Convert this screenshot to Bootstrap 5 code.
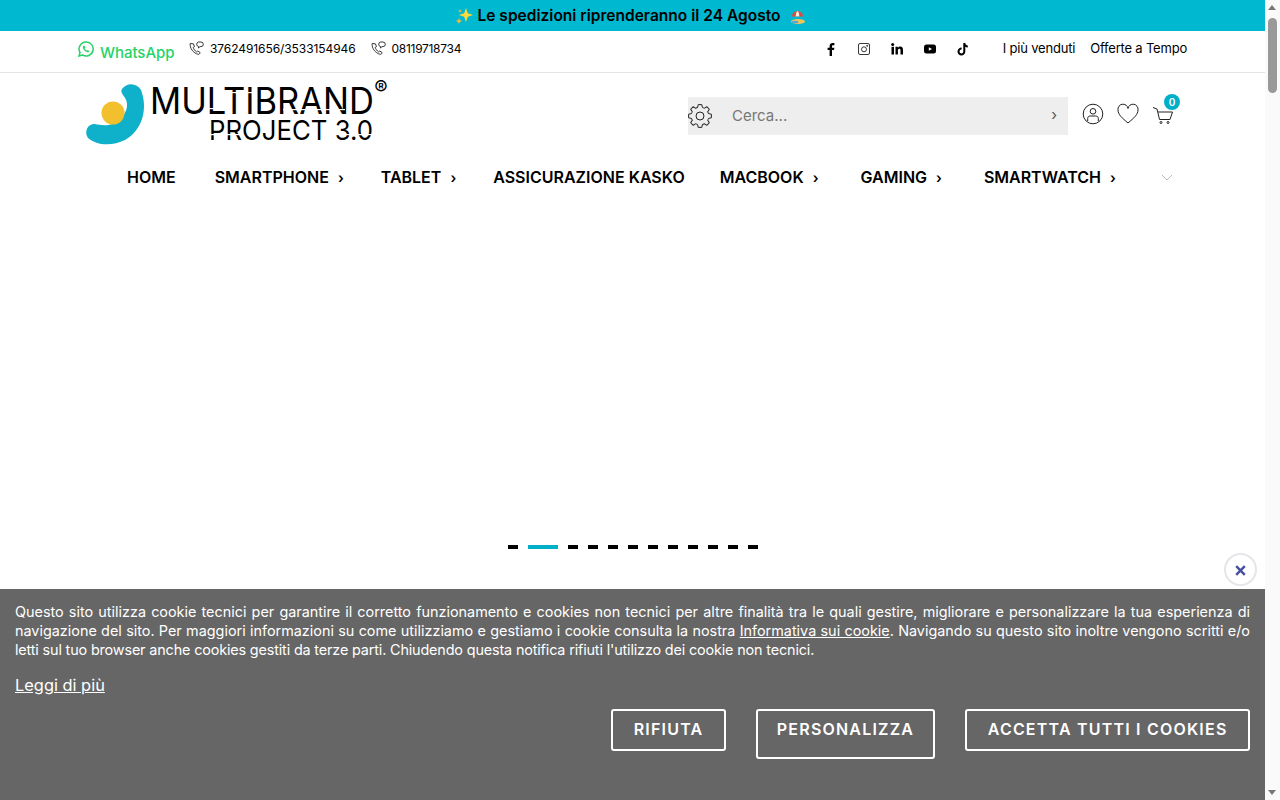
<!DOCTYPE html>
<html lang="it">
<head>
  <meta charset="UTF-8" />
  <meta name="viewport" content="width=device-width, initial-scale=1" />
  <title>Multibrand Project 3.0</title>
  <link href="https://cdn.jsdelivr.net/npm/bootstrap@5.3.0/dist/css/bootstrap.min.css" rel="stylesheet" />
  <style>
    html { overflow: hidden; }
    body { font-family: Inter, "Open Sans", sans-serif; color: #000; padding-right: 15px; }
    a { color: inherit; text-decoration: none; }
    .promo-bar { height: 31px; background: #00b8d0; font-size: 15.5px; font-weight: 600; letter-spacing: .02px; padding-top: 1px; }
    .promo-bar svg { margin-right: 4px; }
    .util-bar { height: 42px; border-bottom: 1px solid #e4e4e4; padding: 0 78px 5px; font-size: 12px; }
    .wa-link { color: #25d366; font-size: 15px; font-weight: 500; margin-top: 8px; width: 111px; letter-spacing: -.05px; }
    .wa-link svg { margin: -8px 6px 0 0; }
    .tel-link { margin-right: 15px; letter-spacing: -.08px; }
    .tel-link svg { margin-right: 6px; margin-top: -2px; }
    .tel-short { letter-spacing: -.3px; }
    .social-list { margin-left: auto; gap: 19px; }
    .util-links { gap: 15px; font-size: 13px; letter-spacing: -.2px; margin-left: 33px; }
    .logo-row { height: 83px; padding-left: 85px; }
    .logo-art { overflow: visible; margin-top: -2px; }
    .logo-name { font-family: Inter, sans-serif; font-weight: 400; }
    .search-box { width: 380px; height: 38px; background: #eee; margin-left: 300px; margin-top: 2px; }
    .search-box input { border: 0; background: none; outline: 0; font-size: 15px; font-family: inherit; margin-left: 20px; width: 300px; padding: 1px 0 0; }
    .search-box input::placeholder { color: #777; }
    .search-go { font-size: 15px; color: #555; margin-left: auto; margin-right: 11px; }
    .head-icons { gap: 13px; margin-left: 14px; margin-top: -2px; }
    .cart-wrap { position: relative; }
    .cart-wrap svg { margin-top: 3px; }
    .cart-count { position: absolute; top: -7px; right: -6px; width: 16px; height: 16px; border-radius: 50%; background: #00b0c8; color: #fff; font-size: 10px; font-weight: 600; line-height: 16px; text-align: center; }
    .main-menu { height: 44px; padding: 0 0 2px 127px; gap: 37px; font-size: 16px; font-weight: 600; white-space: nowrap; }
    .main-menu a { display: block; }
    .main-menu .arrow { font-size: 14px; margin-left: 5px; }
    .menu-home { margin-right: 2px; }
    .menu-kasko { margin-right: -2px; }
    .menu-wide { margin-right: 5px; }
    .menu-last { margin-right: 8px; }
    .slide-dots { gap: 10px; padding-top: 345px; margin-left: 508px; }
    .slide-dot { width: 10px; height: 4px; background: #000; }
    .slide-dot.on { width: 30px; background: #00b0c8; }
    .cookie-panel { position: fixed; left: 0; right: 15px; bottom: 0; height: 211px; background: #666; color: #fff; padding: 13px 15px 0; font-size: 14.4px; line-height: 19px; }
    .cookie-line { display: block; text-align: justify; text-align-last: justify; }
    .cookie-tail { letter-spacing: -.15px; }
    .cookie-panel a { text-decoration: underline; }
    .read-more { display: inline-block; margin-top: 14px; font-size: 16.4px; line-height: 24px; }
    .cookie-actions { gap: 30px; margin-top: 12px; align-items: flex-start; }
    .cookie-btn { border: 2px solid #fff; border-radius: 3px; background: none; color: #fff; font-size: 16px; font-weight: 600; letter-spacing: 1.2px; height: 42px; padding: 0 20.5px 2px; white-space: nowrap; }
    .cookie-btn.tall { height: 50px; padding: 0 19px 10px; }
    .close-round { position: fixed; left: 1224px; top: 553px; width: 33px; height: 33px; border-radius: 50%; background: #fff; border: 2px solid #e4e6ea; padding: 2px 0 0 0; }
    .close-round svg { display: block; margin: 0 auto; }
    .fake-scroll { position: fixed; top: 0; right: 0; bottom: 0; width: 15px; background: #fafafa; }
    .fake-thumb { position: absolute; top: 18px; left: 3px; width: 9px; height: 75px; border-radius: 5px; background: #999; }
    .fake-up, .fake-down { position: absolute; left: 3px; border-left: 4.500px solid transparent; border-right: 4.500px solid transparent; }
    .fake-up { top: 5px; border-bottom: 5px solid #777; }
    .fake-down { bottom: 5px; border-top: 5px solid #777; }
  </style>
</head>
<body>
  <div class="promo-bar d-flex align-items-center justify-content-center">
    <svg width="18" height="18" viewBox="0 0 18 18"><path d="M11 1l1.800 5.200L18 8l-5.200 1.800L11 15 9.200 9.800 4 8l5.200-1.800z" fill="#ffd83d"/><path d="M4 11l.9 2.100L7 14l-2.100.9L4 17l-.9-2.100L1 14l2.100-.9z" fill="#ffb636"/><path d="M5 2l.6 1.400L7 4l-1.400.6L5 6l-.6-1.400L3 4l1.400-.6z" fill="#ffb636"/></svg>
    <span>Le spedizioni riprenderanno il 24 Agosto</span>
    <svg class="ms-2" width="17" height="17" viewBox="0 0 17 17"><path d="M3 8.500a5.500 5.500 0 0 1 11 0z" fill="#dd4b3e"/><path d="M6.700 8.500c0-3 .8-5 1.800-5.500 1 .5 1.800 2.500 1.800 5.500z" fill="#f4eee4"/><rect x="8" y="8.500" width="1" height="3.500" fill="#9b7a55"/><ellipse cx="9" cy="13.500" rx="7" ry="2.500" fill="#f0c55a"/><ellipse cx="6" cy="14" rx="3.500" ry="1.300" fill="#58a6d8"/></svg>
  </div>

  <div class="util-bar d-flex align-items-center">
    <a href="#" class="wa-link d-flex align-items-center">
      <svg width="16" height="16" viewBox="0 0 16 16" fill="none" stroke="#25d366"><path d="M8 1a7 7 0 0 0-6 10.500L1 15l3.600-1A7 7 0 1 0 8 1z" stroke-width="1.500"/><path d="M5.500 4.800c-.8.700-.8 1.900 0 3.200 1 1.800 2.500 3 4 3.200 1 .1 1.600-.5 1.700-1.300L9.700 9l-.8.700C8 9.300 7 8.300 6.700 7.300l.6-.8-.7-1.700z" fill="#25d366" stroke="none"/></svg>
      WhatsApp
    </a>
    <a href="#" class="tel-link d-flex align-items-center">
      <svg width="15" height="15" viewBox="0 0 15 15" fill="none" stroke="#222" stroke-width=".9"><path d="M1.200 2.500c-.7 4.500 3 9.600 8 10.800 1 .2 1.700-.7 1.900-1.700L8.800 10l-1.300.9C6 9.900 4.600 8 4.200 6.400l1.300-.8L4.400 2.800z"/><path d="M9.500 1h2.500a2.300 2.300 0 0 1 0 4.600h-1L9.500 7V5.500a2.300 2.300 0 0 1 0-4.500z"/></svg>
      3762491656/3533154946
    </a>
    <a href="#" class="tel-link tel-short d-flex align-items-center">
      <svg width="15" height="15" viewBox="0 0 15 15" fill="none" stroke="#222" stroke-width=".9"><path d="M1.200 2.500c-.7 4.500 3 9.600 8 10.800 1 .2 1.700-.7 1.900-1.700L8.800 10l-1.300.9C6 9.900 4.600 8 4.200 6.400l1.300-.8L4.400 2.800z"/><path d="M9.500 1h2.500a2.300 2.300 0 0 1 0 4.600h-1L9.500 7V5.500a2.300 2.300 0 0 1 0-4.500z"/></svg>
      08119718734
    </a>
    <div class="social-list d-flex align-items-center">
      <svg width="14" height="14" viewBox="0 0 14 14"><path d="M8 14V8h2l.4-2.300H8V4.300c0-.7.3-1.100 1.100-1.100h1.300V1.100C10 1 9.300 1 8.600 1 6.800 1 5.600 2 5.600 4v1.700H3.600V8h2v6z"/></svg>
      <svg width="14" height="14" viewBox="0 0 14 14" fill="none" stroke="#222" stroke-width=".9"><rect x="1.500" y="1.500" width="11" height="11" rx="1.500"/><circle cx="7" cy="7.300" r="2.500"/><circle cx="10.200" cy="3.800" r=".5" fill="#222"/></svg>
      <svg width="14" height="14" viewBox="0 0 14 14"><rect x="1.500" y="4.800" width="2.500" height="7.700"/><circle cx="2.700" cy="2.500" r="1.500"/><path d="M5.500 4.800h2.400v1.100c.5-.8 1.300-1.300 2.300-1.300 2 0 2.800 1.200 2.800 3.400v4.500h-2.500V8.400c0-1-.3-1.700-1.200-1.700-1 0-1.400.8-1.400 1.700v4.100H5.500z"/></svg>
      <svg width="14" height="14" viewBox="0 0 14 14"><rect x="1" y="2.500" width="12" height="9" rx="2.500"/><path d="M5.800 5.200L9 7 5.800 8.800z" fill="#fff"/></svg>
      <svg width="14" height="14" viewBox="0 0 14 14"><path d="M7.300 1h2c.1 1.500 1 2.500 2.500 2.600v1.900c-1 0-1.800-.3-2.500-.8v4.700A3.900 3.900 0 1 1 5.600 5.600v2a1.900 1.900 0 1 0 1.700 1.900z"/></svg>
    </div>
    <div class="util-links d-flex">
      <a href="#">I più venduti</a>
      <a href="#">Offerte a Tempo</a>
    </div>
  </div>

  <div class="logo-row d-flex align-items-center">
    <svg class="logo-art" width="303" height="68" viewBox="0 0 303 68">
      <path d="M37 9C42 2 52 3 56 10C63 28 58 50 40 60C28 66 12 66 3 58C-1 52 2 44 10 44C18 46 28 46 34 40C44 31 44 22 38 15C36 12 36 11 37 9Z" fill="#0fb0c9"/>
      <circle cx="28" cy="33" r="11.500" fill="#f2c02c"/>
      <text class="logo-name" x="65" y="34" font-size="37" textLength="224" lengthAdjust="spacingAndGlyphs">MULTIBRAND</text>
      <text class="logo-name" x="124" y="60" font-size="27.500" textLength="164" lengthAdjust="spacingAndGlyphs">PROJECT 3.0</text>
      <text class="logo-name" x="296" y="15" font-size="20" text-anchor="middle">®</text>
      <!-- stencil cuts of the wordmark -->
      <rect x="120" y="28" width="22" height="1.200" fill="#fff"/>
      <rect x="198" y="29" width="62" height="1.200" fill="#fff"/>
      <rect x="140" y="12" width="30" height="1.200" fill="#fff"/>
      <rect x="122" y="54" width="36" height="1.200" fill="#fff"/>
      <rect x="250" y="54" width="40" height="1.200" fill="#fff"/>
    </svg>
    <form class="search-box d-flex align-items-center" onsubmit="return false;">
      <svg width="24" height="24" viewBox="0 0 24 24" fill="none" stroke="#222" stroke-width="1" stroke-linejoin="round">
        <circle cx="12" cy="12" r="4"/>
        <path id="gearTooth" d="M20.46 9.570L23.360 10.200V13.800L20.460 14.430A8.800 8.800 0 0 1 19.700 16.270"/>
        <use href="#gearTooth" transform="rotate(45 12 12)"/>
        <use href="#gearTooth" transform="rotate(90 12 12)"/>
        <use href="#gearTooth" transform="rotate(135 12 12)"/>
        <use href="#gearTooth" transform="rotate(180 12 12)"/>
        <use href="#gearTooth" transform="rotate(225 12 12)"/>
        <use href="#gearTooth" transform="rotate(270 12 12)"/>
        <use href="#gearTooth" transform="rotate(315 12 12)"/>
      </svg>
      <input type="text" placeholder="Cerca..." />
      <span class="search-go">›</span>
    </form>
    <div class="head-icons d-flex align-items-center">
      <svg width="22" height="22" viewBox="0 0 22 22" fill="none" stroke="#222" stroke-width="1"><circle cx="11" cy="11" r="9.800"/><circle cx="11" cy="8.300" r="2.800"/><path d="M5.700 18v-2.500c0-1.600 1-2.500 2.600-2.500h5.400c1.600 0 2.600.9 2.600 2.500V18"/></svg>
      <svg width="22" height="22" viewBox="0 0 22 22" fill="none" stroke="#222" stroke-width="1"><path d="M11 20C5 15 1 11.500 1 7a5 5 0 0 1 10-1.500A5 5 0 0 1 21 7c0 4.500-4 8-10 13z"/></svg>
      <span class="cart-wrap d-block">
        <svg class="d-block" width="22" height="22" viewBox="0 0 22 22" fill="none" stroke="#222" stroke-width="1"><path d="M1 3.500l4 1.500 2.500 10.500h10.500L20.500 8H6"/><circle cx="9" cy="18.500" r="1"/><circle cx="16" cy="18.500" r="1"/></svg>
        <span class="cart-count">0</span>
      </span>
    </div>
  </div>

  <nav class="main-menu d-flex align-items-center">
    <a href="#" class="menu-home">HOME</a>
    <a href="#">SMARTPHONE <span class="arrow">›</span></a>
    <a href="#">TABLET <span class="arrow">›</span></a>
    <a href="#" class="menu-kasko">ASSICURAZIONE KASKO</a>
    <a href="#" class="menu-wide">MACBOOK <span class="arrow">›</span></a>
    <a href="#" class="menu-wide">GAMING <span class="arrow">›</span></a>
    <a href="#" class="menu-last">SMARTWATCH <span class="arrow">›</span></a>
    <svg width="12" height="7" viewBox="0 0 12 7" fill="none" stroke="#bbb"><path d="M1 1l5 5 5-5"/></svg>
  </nav>

  <div class="slide-dots d-flex">
    <span class="slide-dot"></span><span class="slide-dot on"></span><span class="slide-dot"></span><span class="slide-dot"></span><span class="slide-dot"></span><span class="slide-dot"></span><span class="slide-dot"></span><span class="slide-dot"></span><span class="slide-dot"></span><span class="slide-dot"></span><span class="slide-dot"></span><span class="slide-dot"></span>
  </div>

  <button type="button" class="close-round" aria-label="Chiudi"><svg width="11" height="11" viewBox="0 0 11 11" stroke="#44509f" stroke-width="2.400"><path d="M1.200 1.200l8.600 8.600M9.800 1.200l-8.600 8.600"/></svg></button>
  <div class="cookie-panel">
    <span class="cookie-line">Questo sito utilizza cookie tecnici per garantire il corretto funzionamento e cookies non tecnici per altre finalità tra le quali gestire, migliorare e personalizzare la tua esperienza di</span>
    <span class="cookie-line">navigazione del sito. Per maggiori informazioni su come utilizziamo e gestiamo i cookie consulta la nostra <a href="#">Informativa sui cookie</a>. Navigando su questo sito inoltre vengono scritti e/o</span>
    <span class="d-block cookie-tail">letti sul tuo browser anche cookies gestiti da terze parti. Chiudendo questa notifica rifiuti l'utilizzo dei cookie non tecnici.</span>
    <a href="#" class="read-more">Leggi di più</a>
    <div class="cookie-actions d-flex justify-content-end">
      <button type="button" class="cookie-btn">RIFIUTA</button>
      <button type="button" class="cookie-btn tall">PERSONALIZZA</button>
      <button type="button" class="cookie-btn">ACCETTA TUTTI I COOKIES</button>
    </div>
  </div>
  <div class="fake-scroll"><span class="fake-up"></span><span class="fake-thumb"></span><span class="fake-down"></span></div>
  <script src="https://cdn.jsdelivr.net/npm/bootstrap@5.3.0/dist/js/bootstrap.bundle.min.js"></script>
</body>
</html>
